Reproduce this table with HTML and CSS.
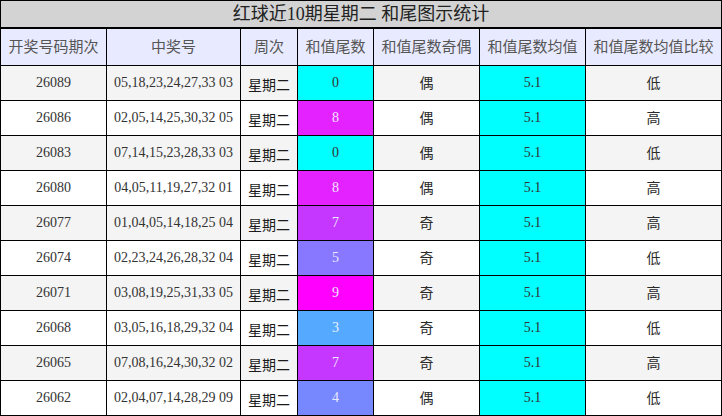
FILE: index.html
```html
<!DOCTYPE html>
<html lang="zh">
<head>
<meta charset="utf-8">
<link rel="stylesheet" href="styles.css">
</head>
<body>
<table class="tbl">
<colgroup>
<col class="c1"><col class="c2"><col class="c3"><col class="c4"><col class="c5"><col class="c6"><col class="c7">
</colgroup>
<tr class="title"><td colspan="7">红球近10期星期二 和尾图示统计</td></tr>
<tr class="head"><td>开奖号码期次</td><td>中奖号</td><td>周次</td><td>和值尾数</td><td>和值尾数奇偶</td><td>和值尾数均值</td><td>和值尾数均值比较</td></tr>
<tr class="row odd"><td class="num">26089</td><td class="num">05,18,23,24,27,33 03</td><td class="wk">星期二</td><td class="num v0">0</td><td class="cj">偶</td><td class="num avg">5.1</td><td class="cj">低</td></tr>
<tr class="row"><td class="num">26086</td><td class="num">02,05,14,25,30,32 05</td><td class="wk">星期二</td><td class="num v8">8</td><td class="cj">偶</td><td class="num avg">5.1</td><td class="cj">高</td></tr>
<tr class="row odd"><td class="num">26083</td><td class="num">07,14,15,23,28,33 03</td><td class="wk">星期二</td><td class="num v0">0</td><td class="cj">偶</td><td class="num avg">5.1</td><td class="cj">低</td></tr>
<tr class="row"><td class="num">26080</td><td class="num">04,05,11,19,27,32 01</td><td class="wk">星期二</td><td class="num v8">8</td><td class="cj">偶</td><td class="num avg">5.1</td><td class="cj">高</td></tr>
<tr class="row odd"><td class="num">26077</td><td class="num">01,04,05,14,18,25 04</td><td class="wk">星期二</td><td class="num v7">7</td><td class="cj">奇</td><td class="num avg">5.1</td><td class="cj">高</td></tr>
<tr class="row"><td class="num">26074</td><td class="num">02,23,24,26,28,32 04</td><td class="wk">星期二</td><td class="num v5">5</td><td class="cj">奇</td><td class="num avg">5.1</td><td class="cj">低</td></tr>
<tr class="row odd"><td class="num">26071</td><td class="num">03,08,19,25,31,33 05</td><td class="wk">星期二</td><td class="num v9">9</td><td class="cj">奇</td><td class="num avg">5.1</td><td class="cj">高</td></tr>
<tr class="row"><td class="num">26068</td><td class="num">03,05,16,18,29,32 04</td><td class="wk">星期二</td><td class="num v3">3</td><td class="cj">奇</td><td class="num avg">5.1</td><td class="cj">低</td></tr>
<tr class="row odd"><td class="num">26065</td><td class="num">07,08,16,24,30,32 02</td><td class="wk">星期二</td><td class="num v7">7</td><td class="cj">奇</td><td class="num avg">5.1</td><td class="cj">高</td></tr>
<tr class="row"><td class="num">26062</td><td class="num">02,04,07,14,28,29 09</td><td class="wk">星期二</td><td class="num v4">4</td><td class="cj">偶</td><td class="num avg">5.1</td><td class="cj">低</td></tr>
</table>
</body>
</html>
```
FILE: styles.css
```css
html, body {
  margin: 0;
  padding: 0;
  background: #fff;
}
.tbl {
  width: 721px;
  border-collapse: collapse;
  table-layout: fixed;
  font-family: "Liberation Serif", "Noto Sans CJK SC", serif;
  border: 1px solid #000;
}
.c1 { width: 106px; }
.c2 { width: 134px; }
.c3 { width: 57px; }
.c4 { width: 76px; }
.c5 { width: 106px; }
.c6 { width: 106px; }
.c7 { width: 136px; }
.tbl td {
  border: 1px solid #000;
  text-align: center;
  padding: 0;
  line-height: 18px;
  white-space: nowrap;
  overflow: hidden;
}
.title { height: 27px; }
.title td {
  background: #d3d3d3;
  font-size: 18px;
  line-height: 22px;
  color: #222;
  border-bottom: 2px solid #000;
}
.head { height: 38px; }
.head td {
  background: #e8eaff;
  color: #555;
  font-size: 15px;
}
.row { height: 35px; }
.row td {
  font-size: 14px;
  color: #333;
  background: #fff;
}
.row.odd td { background: #f4f4f4; }
.row td.wk { color: #1a1a1a; padding-top: 5px; }
.row td.cj { color: #2a2a2a; padding-top: 2px; }
.row td.avg { background: #00ffff; color: #333; }
.row td.v0 { background: #00ffff; color: #333; }
.row td.v8 { background: #e322ff; color: #f0e6ff; }
.row td.v7 { background: #c537ff; color: #f0e6ff; }
.row td.v5 { background: #8877ff; color: #e8e8ff; }
.row td.v9 { background: #ff00ff; color: #f0e6ff; }
.row td.v3 { background: #55aaff; color: #e8f0ff; }
.row td.v4 { background: #7788ff; color: #e8e8ff; }
```
